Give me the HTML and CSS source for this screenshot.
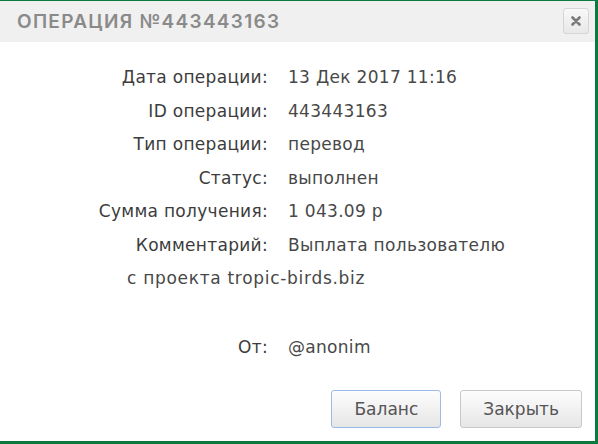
FILE: index.html
```html
<!DOCTYPE html>
<html lang="ru">
<head>
  <meta charset="UTF-8">
  <meta name="viewport" content="width=device-width, initial-scale=1.0">
  <title>Операция №443443163</title>
  <link rel="stylesheet" href="styles.css">
</head>
<body>

  <div class="dialog">
    <div class="header">
      <h2>Операция №443443163</h2>
      <button class="close" type="button" title="Закрыть">
        <svg width="10" height="10" viewBox="0 0 10 10">
          <path d="M1.5 1.5 L8.5 8.5 M8.5 1.5 L1.5 8.5" stroke="#7a7a7a" stroke-width="2.6" stroke-linecap="round"/>
        </svg>
      </button>
    </div>

    <div class="details">
      <div class="label">Дата операции:</div>
      <div class="value">13 Дек 2017 11:16</div>

      <div class="label">ID операции:</div>
      <div class="value">443443163</div>

      <div class="label">Тип операции:</div>
      <div class="value">перевод</div>

      <div class="label">Статус:</div>
      <div class="value">выполнен</div>

      <div class="label">Сумма получения:</div>
      <div class="value">1 043.09 р</div>

      <div class="label">Комментарий:</div>
      <div class="value">Выплата пользователю</div>

      <div class="wrap">с проекта tropic-birds.biz</div>

      <div class="label from">От:</div>
      <div class="value from">@anonim</div>
    </div>

    <div class="footer">
      <button type="button" class="btn focused">Баланс</button>
      <button type="button" class="btn">Закрыть</button>
    </div>
  </div>

</body>
</html>
```

FILE: styles.css
```css
body {
  margin: 0;
  background-color: #fff;
  font-family: "DejaVu Sans", sans-serif;
}

.dialog {
  width: 595px;
  height: 440px;
  border-top: 1px solid #0b7a3e;
  border-right: 3px solid #0b7a3e;
  border-bottom: 3px solid #0b7a3e;
  display: flex;
  flex-direction: column;
}

.header {
  height: 41px;
  background-color: #f0f0f0;
  display: flex;
  align-items: center;
  justify-content: space-between;
  padding: 0 6px 0 17px;
}

.header h2 {
  margin: 0;
  font-family: Inter, "Noto Sans", sans-serif;
  font-size: 19px;
  font-weight: 600;
  letter-spacing: 1.3px;
  text-transform: uppercase;
  color: #8a8a8a;
}

.close {
  width: 26px;
  height: 26px;
  padding: 0;
  margin-top: -2px;
  border: 1px solid #d6d6d6;
  border-radius: 3px;
  background: linear-gradient(#f8f8f8, #e8e8e8);
  display: flex;
  align-items: center;
  justify-content: center;
  cursor: pointer;
}

.details {
  display: grid;
  grid-template-columns: 268px auto;
  column-gap: 20px;
  padding-top: 19px;
  font-size: 17px;
  letter-spacing: 0.3px;
  line-height: 33.5px;
  color: #3c3c3c;
}

.label {
  text-align: right;
}

.value {
  color: #484848;
}

.wrap {
  grid-column: 1 / 3;
  padding-left: 127px;
  letter-spacing: 0.7px;
  color: #484848;
}

.from {
  margin-top: 35px;
}

.footer {
  margin-top: auto;
  display: flex;
  justify-content: flex-end;
  gap: 19px;
  padding: 0 13px 13px 0;
}

.btn {
  height: 38px;
  padding: 0 22px;
  font-family: "DejaVu Sans", sans-serif;
  font-size: 17px;
  color: #555;
  border: 1px solid #c8c8c8;
  border-radius: 3px;
  background: linear-gradient(#fdfdfd, #e6e6e6);
  cursor: pointer;
}

.btn.focused {
  border-color: #9dbbe9;
}
```
